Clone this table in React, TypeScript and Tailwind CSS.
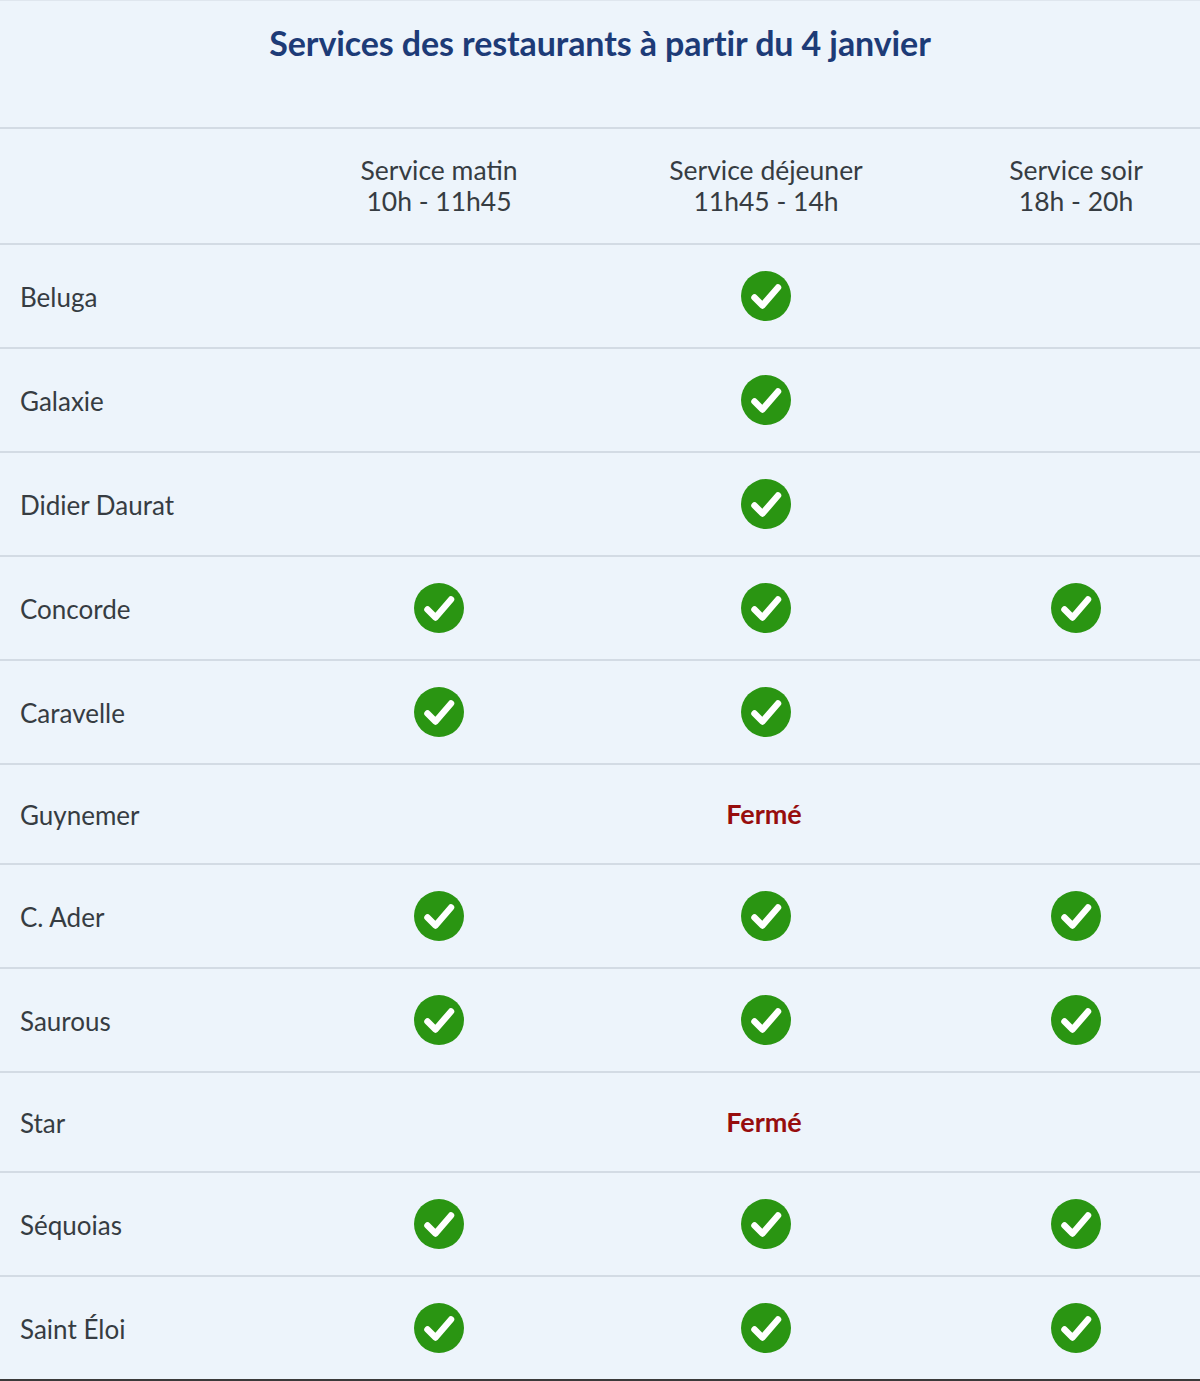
import React from "react";

type Cell = "yes" | "no";

interface Row {
  name: string;
  closed?: boolean;
  cells?: Cell[];
}

const rows: Row[] = [
  { name: "Beluga", cells: ["no", "yes", "no"] },
  { name: "Galaxie", cells: ["no", "yes", "no"] },
  { name: "Didier Daurat", cells: ["no", "yes", "no"] },
  { name: "Concorde", cells: ["yes", "yes", "yes"] },
  { name: "Caravelle", cells: ["yes", "yes", "no"] },
  { name: "Guynemer", closed: true },
  { name: "C. Ader", cells: ["yes", "yes", "yes"] },
  { name: "Saurous", cells: ["yes", "yes", "yes"] },
  { name: "Star", closed: true },
  { name: "Séquoias", cells: ["yes", "yes", "yes"] },
  { name: "Saint Éloi", cells: ["yes", "yes", "yes"] },
];

const CheckIcon = () => (
  <svg width="52" height="52" viewBox="0 0 52 52">
    <circle cx="26" cy="26" r="25" fill="#2a9512" />
    <path
      d="M14.5 27.5 L22.5 35.5 L38 17.5"
      fill="none"
      stroke="#ffffff"
      strokeWidth="6.5"
      strokeLinecap="round"
      strokeLinejoin="round"
    />
  </svg>
);

const gridCols = "grid grid-cols-[298px_282px_372px_248px]";

const App: React.FC = () => {
  return (
    <div
      className="w-[1200px] bg-[#edf4fb] text-[#363c42]"
      style={{ fontFamily: "Lato, 'Noto Sans', sans-serif" }}
    >
      <div className="h-[129px] border-t border-[#dfe6ee] border-b-2 border-b-[#d3dbe4] pt-[16px] text-center">
        <h1 className="text-[34px] font-bold text-[#1d3b77] tracking-[-0.1px]">
          Services des restaurants à partir du 4 janvier
        </h1>
      </div>

      <div className={`${gridCols} h-[116px] border-b-2 border-[#d3dbe4] items-center text-[26.5px] leading-[31px] text-center`}>
        <div />
        <div>
          Service matin
          <br />
          10h - 11h45
        </div>
        <div>
          Service déjeuner
          <br />
          11h45 - 14h
        </div>
        <div>
          Service soir
          <br />
          18h - 20h
        </div>
      </div>

      {rows.map((row, i) => (
        <div
          key={row.name}
          className={`${gridCols} items-center border-b-2 ${
            i === rows.length - 1 ? "border-[#3a3a3a]" : "border-[#d3dbe4]"
          } ${row.closed ? "h-[100px]" : "h-[104px]"}`}
        >
          <div className="pl-[20px] text-[26px] pt-[3px]">{row.name}</div>
          {row.closed ? (
            <>
              <div />
              <div className="flex justify-center pr-[4px] text-[27px] font-bold text-[#970d0d]">
                Fermé
              </div>
              <div />
            </>
          ) : (
            row.cells?.map((c, j) => (
              <div key={j} className="flex justify-center">
                {c === "yes" && <CheckIcon />}
              </div>
            ))
          )}
        </div>
      ))}
    </div>
  );
};

export default App;
